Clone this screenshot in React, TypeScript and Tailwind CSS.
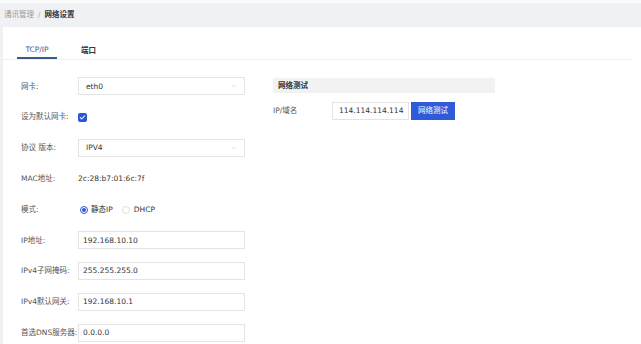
import { Check, ChevronDown } from 'lucide-react'

const font = { fontFamily: '"DejaVu Sans", "Noto Sans CJK SC", sans-serif' }

function Row({ label, children }: { label: string; children: React.ReactNode }) {
  return (
    <div className="flex h-[30.8px] items-center">
      <div className="w-[57px] shrink-0 whitespace-nowrap text-[#555]">{label}</div>
      {children}
    </div>
  )
}

function Select({ value }: { value: string }) {
  return (
    <div className="flex h-[18px] w-[167px] items-center justify-between border border-[#e4e4e4] bg-white pl-[7px] pr-[6px] text-[#333]">
      <span>{value}</span>
      <ChevronDown className="h-[8px] w-[8px] text-[#c8c8c8]" strokeWidth={1.5} />
    </div>
  )
}

function Input({ value, w = 'w-[167px]', pad = 'pl-[4px]' }: { value: string; w?: string; pad?: string }) {
  return (
    <div className={`flex h-[18px] ${w} ${pad} items-center border border-[#e4e4e4] bg-white text-[#333]`}>
      {value}
    </div>
  )
}

export default function App() {
  return (
    <div className="h-[344px] w-[641px] overflow-hidden bg-[#f0f1f5] text-[7.5px] leading-none" style={font}>
      <div className="h-[3px] bg-[#fbfbfb]" />
      <div className="flex h-[24px] items-center gap-[4px] px-[4px]">
        <span className="text-[#999]">通讯管理</span>
        <span className="text-[#aaa]">/</span>
        <span className="font-bold text-[#333]">网络设置</span>
      </div>
      <div className="ml-[3px] h-[320px] bg-white">
        <div className="mr-[9px] flex h-[33px] border-b border-[#eeeeee] pl-[14px]">
          <div className="flex w-[40px] flex-col items-center justify-end">
            <span className="mb-[4px] text-[#3d5c94]">TCP/IP</span>
            <div className="h-[2px] w-full bg-[#3a5a8c]" />
          </div>
          <div className="ml-[24px] flex items-end pb-[5px] font-bold text-[#333]">端口</div>
        </div>
        <div className="flex pt-[11px]">
          <div className="ml-[18px] w-[224px]">
            <Row label="网卡:">
              <Select value="eth0" />
            </Row>
            <Row label="设为默认网卡:">
              <div className="flex h-[9px] w-[9px] items-center justify-center rounded-[2px] bg-[#2f55d4]">
                <Check className="h-[7px] w-[7px] text-white" strokeWidth={3.5} />
              </div>
            </Row>
            <Row label="协议 版本:">
              <Select value="IPV4" />
            </Row>
            <Row label="MAC地址:">
              <span className="text-[#333]">2c:28:b7:01:6c:7f</span>
            </Row>
            <Row label="模式:">
              <div className="ml-[2px] flex items-center text-[#333]">
                <span className="flex h-[8px] w-[8px] items-center justify-center rounded-full border border-[#2f55d4]">
                  <span className="h-[4px] w-[4px] rounded-full bg-[#2f55d4]" />
                </span>
                <span className="ml-[3px]">静态IP</span>
                <span className="ml-[9px] h-[8px] w-[8px] rounded-full border border-[#e0e0e0]" />
                <span className="ml-[4px]">DHCP</span>
              </div>
            </Row>
            <Row label="IP地址:">
              <Input value="192.168.10.10" />
            </Row>
            <Row label="IPv4子网掩码:">
              <Input value="255.255.255.0" />
            </Row>
            <Row label="IPv4默认网关:">
              <Input value="192.168.10.1" />
            </Row>
            <Row label="首选DNS服务器:">
              <Input value="0.0.0.0" />
            </Row>
          </div>
          <div className="ml-[28px] w-[222px] pt-[7px]">
            <div className="flex h-[15px] items-center bg-[#f2f2f2] px-[5px] font-bold text-[#333]">网络测试</div>
            <div className="mt-[9px] flex items-center">
              <span className="w-[59px] text-[#555]">IP/域名</span>
              <Input value="114.114.114.114" w="w-[77px]" pad="pl-[6px]" />
              <button className="ml-[2px] h-[18px] w-[44px] bg-[#2f5bd8] text-[7.5px] text-white">网络测试</button>
            </div>
          </div>
        </div>
      </div>
    </div>
  )
}
